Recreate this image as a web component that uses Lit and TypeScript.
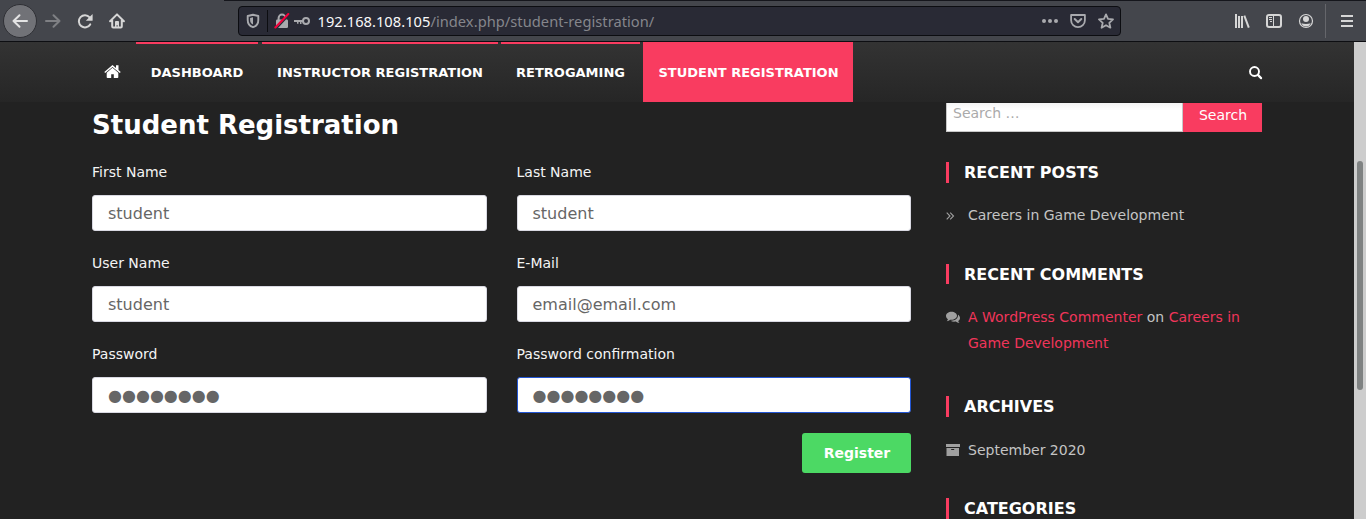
import { LitElement, html, css, svg } from "lit";
import { customElement } from "lit/decorators.js";

const icons = {
  back: svg`<path d="M15 8H1.5M7.500 2.200 1.500 8l6 5.800" fill="none" stroke="currentColor" stroke-width="2" stroke-linecap="round" stroke-linejoin="round"/>`,
  forward: svg`<path d="M1 8h13.5M8.500 2.200 14.500 8l-6 5.800" fill="none" stroke="currentColor" stroke-width="2" stroke-linecap="round" stroke-linejoin="round"/>`,
  reload: svg`<path d="M13.2 11.4A6.1 6.1 0 1 1 12.6 4.300" fill="none" stroke="currentColor" stroke-width="2" stroke-linecap="round"/><path d="M15.600 1v6.200a.6.6 0 0 1-.6.6H8.800z" fill="currentColor"/>`,
  home: svg`<path d="M1.1 8.2 8 1.4l6.9 6.8M3.2 7.5v6.1c0 .6.4 1 1 1h7.6c.6 0 1-.4 1-1V7.500" fill="none" stroke="currentColor" stroke-width="2" stroke-linecap="round" stroke-linejoin="round"/><path d="M6 14V9.200c0-.7.4-1.200 1-1.200h2c.6 0 1 .5 1 1.200V14H8.700v-1.700H7.500V14z" fill="currentColor"/>`,
  shield: svg`<path d="M8 1.800 13.300 3V7c0 3.800-1.700 6.100-5.300 7.200C4.400 13.100 2.700 10.800 2.700 7V3z" fill="none" stroke="currentColor" stroke-width="1.900" stroke-linejoin="round"/><path d="M8 4.300v7.200C6 10.600 5.100 9.100 5.100 7V5z" fill="currentColor"/>`,
  lock: svg`<path d="M4.600 7V5a3.400 3.400 0 0 1 6.800 0v2" fill="none" stroke="currentColor" stroke-width="2"/><rect x="2" y="6.600" width="12" height="8.400" rx="1.300" fill="currentColor"/><path d="M2.200 15.800 15.200 2" stroke="#292a35" stroke-width="1.500"/><path d="M1.300 14.500 14.300 1" stroke="#f7003c" stroke-width="2" stroke-linecap="round"/>`,
  key: svg`<circle cx="12" cy="8" r="3" fill="none" stroke="currentColor" stroke-width="2"/><path d="M0 7h9v2H7.500v2H6V9H4.500v1.700H3V9H0z" fill="currentColor"/>`,
  dots: svg`<circle cx="2" cy="8" r="2" fill="currentColor"/><circle cx="8" cy="8" r="2" fill="currentColor"/><circle cx="14" cy="8" r="2" fill="currentColor"/>`,
  pocket: svg`<path d="M1.100 2h13.800v5.300a6.900 6.900 0 0 1-13.800 0z" fill="none" stroke="currentColor" stroke-width="1.800" stroke-linejoin="round"/><path d="m4.700 6 3.300 3.200L11.300 6" fill="none" stroke="currentColor" stroke-width="2" stroke-linecap="round" stroke-linejoin="round"/>`,
  star: svg`<path d="m8 1.400 2 4.500 5 .5-3.700 3.400 1.100 4.900L8 12.200l-4.400 2.500 1.100-4.900L1 6.400l5-.5z" fill="none" stroke="currentColor" stroke-width="1.800" stroke-linejoin="round"/>`,
  library: svg`<path d="M2 1v14M5 3v12M8 3v12" fill="none" stroke="currentColor" stroke-width="2"/><path d="m10.300 2.600 4.500 12" fill="none" stroke="currentColor" stroke-width="2"/>`,
  sidebar: svg`<rect x="1" y="2" width="14" height="12" rx="2" fill="none" stroke="currentColor" stroke-width="2"/><path d="M7.500 2v12M3 4.500h3M3 6.500h3M4 8.500h2" fill="none" stroke="currentColor" stroke-width="1"/>`,
  account: svg`<circle cx="8" cy="8" r="6.500" fill="none" stroke="currentColor" stroke-width="1.200"/><circle cx="8" cy="6" r="3" fill="currentColor"/><path d="M3.300 10.300c2.800 1 6.600 1 9.400 0-.8 2-2.500 3.300-4.700 3.300s-3.900-1.300-4.700-3.300z" fill="currentColor"/>`,
  menu: svg`<path d="M2 3h12M2 8h12M2 13h12" fill="none" stroke="currentColor" stroke-width="2"/>`,
};

const icon = (name: keyof typeof icons, cls = "") =>
  html`<svg class="icon ${cls}" viewBox="0 0 16 16" aria-hidden="true">${icons[name]}</svg>`;

@customElement("browser-bar")
class BrowserBar extends LitElement {
  static styles = css`
    :host { display: block; }
    .bar { box-sizing: border-box; display: flex; align-items: center; height: 42px; background: #44464c; border-bottom: 1px solid #0d0e12; color: #d6d6d6; padding: 1px 11px 0 0;
      background-image: linear-gradient(#15161c, #15161c); background-size: 1142px 1px; background-position: right top; background-repeat: no-repeat; }
    .icon { display: block; width: 16px; height: 16px; flex: none; }
    .back { box-sizing: border-box; display: flex; align-items: center; justify-content: center; width: 34px; height: 34px; margin-left: 3px; border-radius: 50%; background: #717277; border: 1px solid #2f3035; color: #e4e4e4; }
    .forward { margin-left: 8px; color: #7f8084; }
    .reload { margin-left: 16px; }
    .home { margin-left: 16px; }
    .url { box-sizing: border-box; display: flex; align-items: center; width: 883px; height: 30px; margin-left: 113px; background: #292a35; border: 1px solid #0c0d11; border-radius: 4px; color: #a9aaae; padding: 0 6px; }
    .sep { width: 1px; height: 22px; background: #0c0d11; margin: 0 6px 0 6px; }
    .key { margin-left: 4px; }
    .address { margin: 0 auto 0 7.500px; font: 14.67px/20px "Noto Sans", sans-serif; letter-spacing: 0.035px; color: #85868c; white-space: nowrap; }
    .host { color: #f9f9fa; }
    .gap { margin-left: 12px; }
    .library { margin-left: 113px; }
    .sidebar, .account { margin-left: 16px; }
    .line { width: 1px; height: 34px; background: #65666b; margin: 0 13px 0 11px; }
  `;
  render() {
    return html`<div class="bar">
      <div class="back">${icon("back")}</div>
      ${icon("forward", "forward")} ${icon("reload", "reload")} ${icon("home", "home")}
      <div class="url">
        ${icon("shield")}<span class="sep"></span>${icon("lock")}${icon("key", "key")}
        <span class="address"><span class="host">192.168.108.105</span>/index.php/student-registration/</span>
        ${icon("dots")}${icon("pocket", "gap")}${icon("star", "gap")}
      </div>
      ${icon("library", "library")}${icon("sidebar", "sidebar")}${icon("account", "account")}
      <span class="line"></span>${icon("menu")}
    </div>`;
  }
}

@customElement("site-header")
class SiteHeader extends LitElement {
  static styles = css`
    :host { display: block; }
    .header { box-sizing: border-box; display: flex; height: 60px; padding: 0 91px 0 104px; background: linear-gradient(#333, #262626); color: #fff; }
    .home { width: 17px; height: 14px; margin: 23px 15px 0 0; }
    .item { box-sizing: border-box; height: 60px; margin-right: 3px; border-top: 2px solid #f93c60; font: bold 13px/57px "DejaVu Sans", sans-serif; text-align: center; white-space: nowrap; }
    .dashboard { width: 122px; margin-right: 4px; }
    .instructor { width: 236px; }
    .retro { width: 139px; }
    .student { width: 210px; background: #f93c60; padding-left: 1px; }
    .search { width: 14px; height: 14px; margin: 24px 0 0 auto; }
  `;
  render() {
    return html`<div class="header">
      <svg class="home" viewBox="0 0 17 14"><path d="M8.500 0 .3 7l.9 1.100L8.500 1.900l7.300 6.200.9-1.100-2.200-1.900V.3h-2.500v2.600z" fill="#fff"/><path d="M8.500 2.800 2.700 7.700v4.600c0 .5.3.8.8.8h3.700V9.300h2.600v3.800h3.700c.5 0 .8-.3.8-.8V7.700z" fill="#fff"/></svg>
      <div class="item dashboard">DASHBOARD</div>
      <div class="item instructor">INSTRUCTOR REGISTRATION</div>
      <div class="item retro">RETROGAMING</div>
      <div class="item student">STUDENT REGISTRATION</div>
      <svg class="search" viewBox="0 0 14 14"><circle cx="5.500" cy="5.500" r="4.500" fill="none" stroke="#fff" stroke-width="1.900"/><path d="m8.900 8.900 3.200 3.200" stroke="#fff" stroke-width="2.200" stroke-linecap="round"/></svg>
    </div>`;
  }
}

@customElement("registration-form")
class RegistrationForm extends LitElement {
  static styles = css`
    :host { display: block; width: 819px; font-family: "DejaVu Sans", sans-serif; }
    .title { margin: 0; padding-top: 7px; height: 50px; box-sizing: border-box; font-size: 26px; line-height: 32px; color: #fff; }
    .grid { display: grid; grid-template-columns: 1fr 1fr; column-gap: 30px; }
    .field { height: 91px; box-sizing: border-box; padding-top: 7px; }
    .label { display: block; height: 36px; font-size: 14px; line-height: 26px; color: #f4f4f4; }
    .input { box-sizing: border-box; height: 36px; padding: 0 15px; border: 1px solid #d9d9e2; border-radius: 3px; background: #fff; color: #666; font-size: 16px; line-height: 35px; }
    .focused { border-color: #2356d4; }
    .password { line-height: 36px; }
    .actions { display: flex; justify-content: flex-end; padding-top: 8px; }
    .button { width: 109px; height: 40px; border: 0; padding: 0 0 0 1px; border-radius: 3px; background: #4cd964; color: #fff; font: bold 14px/40px "DejaVu Sans", sans-serif; }
  `;
  render() {
    const fields = [
      ["First Name", "student", ""],
      ["Last Name", "student", ""],
      ["User Name", "student", ""],
      ["E-Mail", "email@email.com", ""],
      ["Password", "●●●●●●●●", "password"],
      ["Password confirmation", "●●●●●●●●", "password focused"],
    ];
    return html`<h1 class="title">Student Registration</h1>
      <div class="grid">
        ${fields.map(([label, value, cls]) => html`<div class="field"><span class="label">${label}</span><div class="input ${cls}">${value}</div></div>`)}
      </div>
      <div class="actions"><button class="button">Register</button></div>`;
  }
}

@customElement("site-sidebar")
class SiteSidebar extends LitElement {
  static styles = css`
    :host { display: block; width: 316px; font: 14px/26px "DejaVu Sans", sans-serif; color: #c4c4c4; }
    .search { display: flex; height: 29px; margin-top: 1px; }
    .input { box-sizing: border-box; width: 237px; border: 1px solid #c8c8c8; border-top: 0; background: linear-gradient(#f4f4f4, #fff 6px); color: #aaa; padding-left: 6px; line-height: 20px; }
    .button { flex: 1; background: #f93c60; color: #fff; text-align: center; line-height: 24px; padding-left: 1px; }
    .title { box-sizing: border-box; margin: 0; height: 21px; padding-left: 15px; border-left: 3px solid #f93c60; font-size: 16px; line-height: 21px; color: #fff; }
    .posts { margin-top: 30px; }
    .comments { margin-top: 36px; height: 20px; }
    .archives { margin-top: 40px; }
    .categories { margin-top: 35px; }
    .row { display: flex; padding-top: 19px; }
    .comment-row, .archive-row { padding-top: 20px; }
    .mark { width: 14px; height: 14px; margin: 7px 8px 0 0; flex: none; color: #a0a0a0; }
    .link { color: #f0355a; }
  `;
  render() {
    return html`<div class="search"><div class="input">Search …</div><div class="button">Search</div></div>
      <h2 class="title posts">RECENT POSTS</h2>
      <div class="row">
        <svg class="mark" viewBox="0 0 14 14"><path d="m.7 3.700 3.300 3.300L.7 10.300M4.200 3.700l3.300 3.300-3.300 3.300" fill="none" stroke="currentColor" stroke-width="1.100"/></svg>
        <span>Careers in Game Development</span>
      </div>
      <h2 class="title comments">RECENT COMMENTS</h2>
      <div class="row comment-row">
        <svg class="mark" viewBox="0 0 14 14"><path d="M5.500.8C8.500.8 11 2.500 11 4.800S8.500 8.800 5.500 8.800l-1.200-.1C3.300 9.400 2.100 10 .8 10.200c.5-.5 1-1.200 1.100-2C.7 7.400 0 6.200 0 4.800 0 2.500 2.500.8 5.500.8z" fill="currentColor"/><path d="M12 3.800c1.200.7 2 1.900 2 3.200 0 1.300-.7 2.300-1.800 3 .1.800.6 1.300 1.300 1.900-1.500 0-2.700-.5-3.700-1.300-2.200.4-4 0-5.300-.9 4.400.3 7.800-2.100 7.500-5.900z" fill="currentColor"/></svg>
        <div>
          <div><span class="link">A WordPress Commenter</span> on <span class="link">Careers in</span></div>
          <div class="link">Game Development</div>
        </div>
      </div>
      <h2 class="title archives">ARCHIVES</h2>
      <div class="row archive-row">
        <svg class="mark" viewBox="0 0 14 14"><path d="M0 0h14v3H0zM.5 4h12.500v8H.5z" fill="currentColor"/><path d="M5.200 5.500h3" stroke="#222" stroke-width="1"/></svg>
        <span>September 2020</span>
      </div>
      <h2 class="title categories">CATEGORIES</h2>`;
  }
}

@customElement("app-root")
class AppRoot extends LitElement {
  static styles = css`
    :host { display: block; width: 1366px; height: 519px; overflow: hidden; background: #222; }
    .view { display: flex; height: 477px; }
    .page { width: 1354px; height: 477px; overflow: hidden; background: #222; }
    .columns { display: flex; gap: 35px; padding-left: 92px; }
    .scroll { box-sizing: border-box; width: 12px; height: 477px; padding: 119px 3px 0; background: #cdcdcd; }
    .thumb { height: 229px; border-radius: 3px; background: #7f8282; }
  `;
  render() {
    return html`<browser-bar></browser-bar>
      <div class="view">
        <div class="page">
          <site-header></site-header>
          <div class="columns"><registration-form></registration-form><site-sidebar></site-sidebar></div>
        </div>
        <div class="scroll"><div class="thumb"></div></div>
      </div>`;
  }
}
